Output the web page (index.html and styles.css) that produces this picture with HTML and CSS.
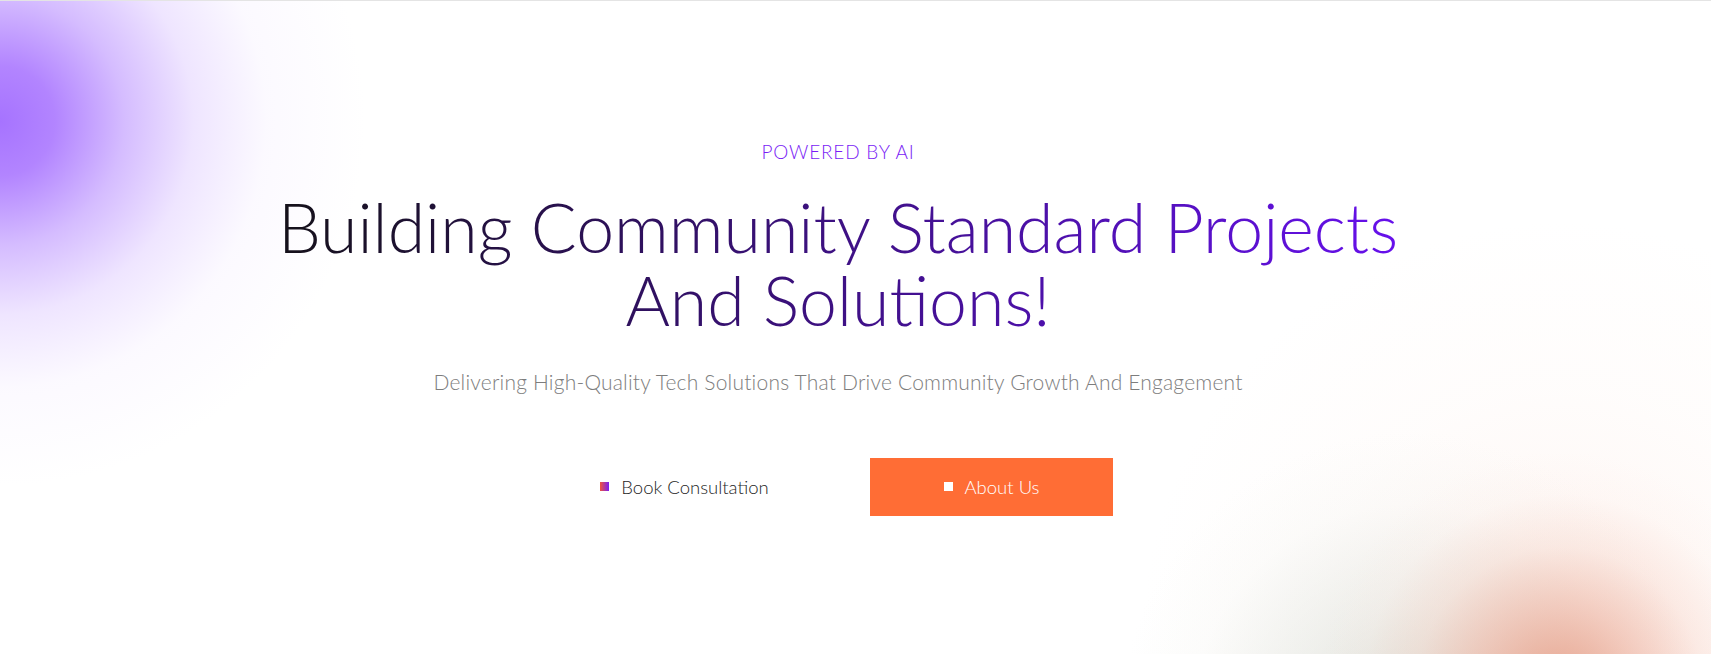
FILE: index.html
```html
<!DOCTYPE html>
<html lang="en">
<head>
<meta charset="utf-8">
<title>Building Community Standard Projects</title>
<link rel="stylesheet" href="styles.css">
</head>
<body>
<section class="hero">
  <div class="hero-inner">
    <p class="eyebrow">POWERED BY AI</p>
    <h1 class="title">Building Community Standard Projects And Solutions!</h1>
    <p class="subtitle">Delivering High-Quality Tech Solutions That Drive Community Growth And Engagement</p>
    <div class="actions">
      <a class="btn btn-ghost" href="#"><span class="dot dot-grad"></span>Book Consultation</a>
      <a class="btn btn-solid" href="#"><span class="dot dot-white"></span>About Us</a>
    </div>
  </div>
</section>
</body>
</html>
```

FILE: styles.css
```css
* { box-sizing: border-box; }
html, body { margin: 0; padding: 0; background: #fff; }
body {
  font-family: Lato, "Open Sans", sans-serif;
  border-top: 1px solid #e4e4e4;
}
.hero {
  height: 653px;
  overflow: hidden;
  display: flex;
  align-items: center;
  justify-content: center;
  padding-right: 35px;
  background:
    radial-gradient(circle 240px at 1560px 690px, rgba(228,150,125,0.85) 0%, rgba(236,170,150,0.55) 35%, rgba(245,200,185,0.3) 60%, rgba(252,230,222,0.12) 82%, rgba(255,255,255,0) 100%),
    radial-gradient(circle 290px at 1410px 720px, rgba(205,210,200,0.7) 0%, rgba(215,220,212,0.4) 40%, rgba(235,238,232,0.15) 75%, rgba(255,255,255,0) 100%),
    radial-gradient(circle 420px at 1560px 640px, rgba(252,225,215,0.35) 0%, rgba(253,238,232,0.15) 60%, rgba(255,255,255,0) 100%),
    radial-gradient(circle 365px at 0px 120px, rgba(166,115,255,1) 0%, rgba(172,122,255,0.92) 15%, rgba(190,152,255,0.65) 34%, rgba(214,190,255,0.4) 53%, rgba(236,224,255,0.18) 73%, rgba(255,255,255,0) 100%),
    #fff;
}
.hero-inner {
  display: flex;
  flex-direction: column;
  align-items: center;
  text-align: center;
}
.eyebrow {
  margin: 0 0 27px;
  font-size: 19px;
  font-weight: 300;
  color: #7a1cf5;
  letter-spacing: 0.8px;
}
.title {
  margin: 0;
  font-size: 68px;
  line-height: 73px;
  font-weight: 300;
  max-width: 1200px;
  background: linear-gradient(95deg, #111111 0%, #6a10f5 100%);
  -webkit-background-clip: text;
  background-clip: text;
  color: transparent;
}
.subtitle {
  margin: 33px 0 0;
  font-size: 21px;
  font-weight: 300;
  letter-spacing: 0.2px;
  color: #7d7d7d;
}
.actions {
  display: flex;
  gap: 64px;
  margin-top: 64px;
}
.btn {
  width: 243px;
  height: 58px;
  display: flex;
  align-items: center;
  justify-content: center;
  gap: 12px;
  text-decoration: none;
  font-size: 18.5px;
  font-weight: 300;
}
.btn-ghost { color: #1e1e1e; }
.btn-solid { background: #ff6d35; color: #fff; }
.dot { width: 9px; height: 9px; display: block; }
.dot-grad { background: linear-gradient(90deg, #f0553c, #7a1ff2); }
.dot-white { background: #fff; }
```
